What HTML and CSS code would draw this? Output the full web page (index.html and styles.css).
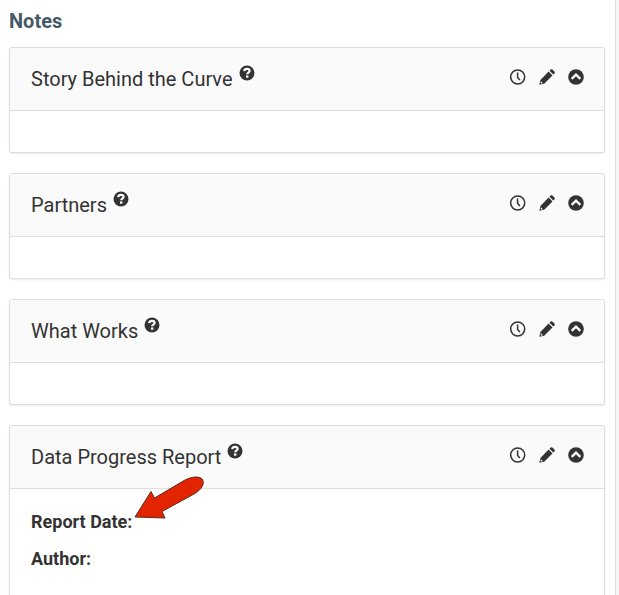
FILE: index.html
```html
<!DOCTYPE html>
<html lang="en">

<head>
    <meta charset="UTF-8">
    <meta name="viewport" content="width=device-width, initial-scale=1.0">
    <title>Notes</title>
    <link rel="stylesheet" href="styles.css">
</head>

<body>
    <!-- icons shared by all the note panels -->
    <svg class="iconDefs" aria-hidden="true">
        <symbol id="help" viewBox="0 0 16 16">
            <circle cx="8" cy="8" r="7.5" fill="currentColor" />
            <path d="M5.2 6.2C5.400 4.500 6.500 3.900 8 3.900c1.600 0 2.600.8 2.600 2 0 1.700-2.400 1.700-2.400 3.300" fill="none" stroke="#fafafa" stroke-width="2.2" />
            <rect x="7" y="10.400" width="2.400" height="2.300" fill="#fafafa" />
        </symbol>
        <symbol id="clock" viewBox="0 0 16 16">
            <circle cx="7.700" cy="8" r="7" fill="none" stroke="currentColor" stroke-width="1.5" />
            <path d="M7.600 3.500v4.900l2.300 2.600" fill="none" stroke="currentColor" stroke-width="1.5" />
        </symbol>
        <symbol id="pencil" viewBox="0 0 16 16">
            <path d="M9.600 2.500l3.900 3.900-8.300 8.300-4.900 1.100 1.100-4.900zM10.500 1.700l1.100-1.100q.9-.9 1.800 0l2 2q.9.9 0 1.800l-1.100 1.100z" fill="currentColor" />
            <path d="M1.900 12.300l2 2-1.300.4-1.100-1.100z" fill="#fafafa" />
        </symbol>
        <symbol id="collapse" viewBox="0 0 16 16">
            <circle cx="8" cy="8" r="7.8" fill="currentColor" />
            <path d="M3.700 9.800L8 5.700l4.300 4.100" fill="none" stroke="#fafafa" stroke-width="2.300" />
        </symbol>
    </svg>

    <main class="notes">
        <h2 class="notesTitle">Notes</h2>

        <section class="panel">
            <header class="panelHeader">
                <h3 class="panelTitle">Story Behind the Curve</h3>
                <button class="iconButton helpButton" type="button" aria-label="Help"><svg class="icon"><use href="#help" /></svg></button>
                <div class="panelActions">
                    <button class="iconButton" type="button" aria-label="History"><svg class="icon"><use href="#clock" /></svg></button>
                    <button class="iconButton" type="button" aria-label="Edit"><svg class="icon"><use href="#pencil" /></svg></button>
                    <button class="iconButton" type="button" aria-label="Collapse"><svg class="icon"><use href="#collapse" /></svg></button>
                </div>
            </header>
            <div class="panelBody"></div>
        </section>

        <section class="panel">
            <header class="panelHeader">
                <h3 class="panelTitle">Partners</h3>
                <button class="iconButton helpButton" type="button" aria-label="Help"><svg class="icon"><use href="#help" /></svg></button>
                <div class="panelActions">
                    <button class="iconButton" type="button" aria-label="History"><svg class="icon"><use href="#clock" /></svg></button>
                    <button class="iconButton" type="button" aria-label="Edit"><svg class="icon"><use href="#pencil" /></svg></button>
                    <button class="iconButton" type="button" aria-label="Collapse"><svg class="icon"><use href="#collapse" /></svg></button>
                </div>
            </header>
            <div class="panelBody"></div>
        </section>

        <section class="panel">
            <header class="panelHeader">
                <h3 class="panelTitle">What Works</h3>
                <button class="iconButton helpButton" type="button" aria-label="Help"><svg class="icon"><use href="#help" /></svg></button>
                <div class="panelActions">
                    <button class="iconButton" type="button" aria-label="History"><svg class="icon"><use href="#clock" /></svg></button>
                    <button class="iconButton" type="button" aria-label="Edit"><svg class="icon"><use href="#pencil" /></svg></button>
                    <button class="iconButton" type="button" aria-label="Collapse"><svg class="icon"><use href="#collapse" /></svg></button>
                </div>
            </header>
            <div class="panelBody"></div>
        </section>

        <section class="panel panelOpen">
            <header class="panelHeader">
                <h3 class="panelTitle">Data Progress Report</h3>
                <button class="iconButton helpButton" type="button" aria-label="Help"><svg class="icon"><use href="#help" /></svg></button>
                <div class="panelActions">
                    <button class="iconButton" type="button" aria-label="History"><svg class="icon"><use href="#clock" /></svg></button>
                    <button class="iconButton" type="button" aria-label="Edit"><svg class="icon"><use href="#pencil" /></svg></button>
                    <button class="iconButton" type="button" aria-label="Collapse"><svg class="icon"><use href="#collapse" /></svg></button>
                </div>
            </header>
            <div class="panelBody">
                <p class="field">
                    <strong class="fieldLabel">Report Date:
                        <svg class="arrow" viewBox="0 0 72 44" aria-hidden="true">
                            <path d="M1 41L17 15.500l3.500 6.500L51 4C58 .5 65 0 68 3c3.500 4-.5 11-8 15L28 35.500l3 6.500z" fill="#e22400" stroke="#5e2a22" stroke-width="1" />
                        </svg>
                    </strong>
                </p>
                <p class="field"><strong class="fieldLabel">Author:</strong></p>
            </div>
        </section>
    </main>
</body>

</html>
```

FILE: styles.css
```css
* {
    box-sizing: border-box;
    font-family: Roboto, sans-serif;
}

body {
    margin: 0;
    padding-right: 3px;
    background-color: #f5f5f5;
    color: #333;
}

h2,
h3,
p {
    margin: 0;
}

.iconDefs {
    display: none;
}

.notes {
    display: flex;
    flex-direction: column;
    gap: 20px;
    min-height: 100vh;
    padding: 9px 10px 0 9px;
    background-color: #fff;
    border-right: 1px solid #ddd;
}

.notesTitle {
    margin-bottom: -6px;
    color: #455a64;
    font-size: 20px;
    font-weight: 700;
    line-height: 24px;
}

.panel {
    border: 1px solid #ddd;
    border-radius: 3px;
    box-shadow: 0 1px 2px rgba(0, 0, 0, 0.08);
    background-color: #fff;
}

.panelHeader {
    display: flex;
    align-items: center;
    height: 63px;
    padding: 0 20px 0 21px;
    background-color: #fafafa;
    border-bottom: 1px solid #ddd;
    border-radius: 2px 2px 0 0;
}

.panelTitle {
    font-size: 20px;
    font-weight: 400;
    line-height: 24px;
}

.iconButton {
    display: block;
    width: 16px;
    height: 16px;
    padding: 0;
    background: none;
    border: 0;
    color: #333;
    cursor: pointer;
}

.icon {
    display: block;
    width: 100%;
    height: 100%;
}

.helpButton {
    margin: 0 0 12px 6px;
}

.panelActions {
    display: flex;
    gap: 13px;
    margin: 0 0 4px auto;
}

.panelBody {
    min-height: 41px;
}

/* last panel runs on to the bottom of the page */
.panelOpen {
    flex: 1;
    border-bottom: 0;
    border-radius: 3px 3px 0 0;
}

.panelOpen .panelBody {
    display: flex;
    flex-direction: column;
    gap: 13px;
    padding: 21px;
}

.field {
    font-size: 18px;
    line-height: 24px;
}

.fieldLabel {
    position: relative;
    font-weight: 700;
}

.arrow {
    position: absolute;
    left: 100%;
    bottom: 12px;
    width: 72px;
    height: 44px;
    margin-left: 2px;
}
```
